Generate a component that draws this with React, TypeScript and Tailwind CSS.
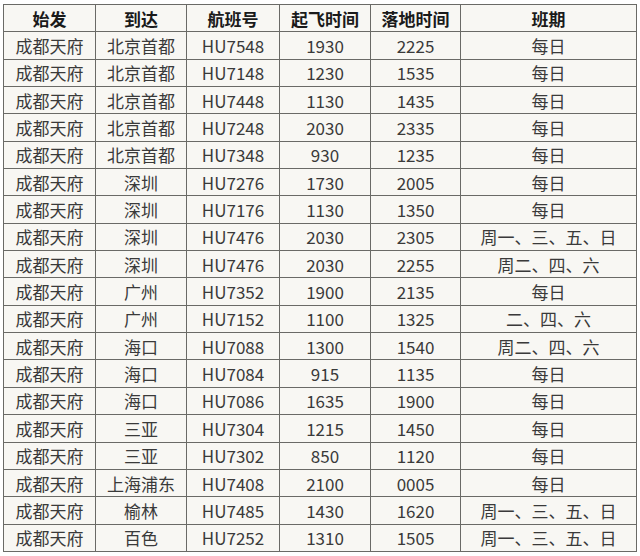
import React from "react";

const rows: string[][] = [
  ["成都天府", "北京首都", "HU7548", "1930", "2225", "每日"],
  ["成都天府", "北京首都", "HU7148", "1230", "1535", "每日"],
  ["成都天府", "北京首都", "HU7448", "1130", "1435", "每日"],
  ["成都天府", "北京首都", "HU7248", "2030", "2335", "每日"],
  ["成都天府", "北京首都", "HU7348", "930", "1235", "每日"],
  ["成都天府", "深圳", "HU7276", "1730", "2005", "每日"],
  ["成都天府", "深圳", "HU7176", "1130", "1350", "每日"],
  ["成都天府", "深圳", "HU7476", "2030", "2305", "周一、三、五、日"],
  ["成都天府", "深圳", "HU7476", "2030", "2255", "周二、四、六"],
  ["成都天府", "广州", "HU7352", "1900", "2135", "每日"],
  ["成都天府", "广州", "HU7152", "1100", "1325", "二、四、六"],
  ["成都天府", "海口", "HU7088", "1300", "1540", "周二、四、六"],
  ["成都天府", "海口", "HU7084", "915", "1135", "每日"],
  ["成都天府", "海口", "HU7086", "1635", "1900", "每日"],
  ["成都天府", "三亚", "HU7304", "1215", "1450", "每日"],
  ["成都天府", "三亚", "HU7302", "850", "1120", "每日"],
  ["成都天府", "上海浦东", "HU7408", "2100", "0005", "每日"],
  ["成都天府", "榆林", "HU7485", "1430", "1620", "周一、三、五、日"],
  ["成都天府", "百色", "HU7252", "1310", "1505", "周一、三、五、日"],
];

const headers = ["始发", "到达", "航班号", "起飞时间", "落地时间", "班期"];
const widths = [92, 91, 93, 91, 90, 176];

export default function App() {
  return (
    <div
      className="w-[640px] h-[556px] bg-white pt-[4px] pl-[3px]"
      style={{ fontFamily: '"Noto Sans CJK SC", "Noto Sans", sans-serif' }}
    >
      <table className="border-collapse table-fixed bg-[#f8f7f3] text-[17px] leading-none">
        <colgroup>
          {widths.map((w, i) => (
            <col key={i} style={{ width: w }} />
          ))}
        </colgroup>
        <thead>
          <tr className="h-[27.35px]">
            {headers.map((h) => (
              <th
                key={h}
                className="border border-[#6a6a66] p-0 text-center font-bold text-[#1a1a1a]"
              >
                {h}
              </th>
            ))}
          </tr>
        </thead>
        <tbody>
          {rows.map((r, i) => (
            <tr key={i} className="h-[27.35px]">
              {r.map((c, j) => (
                <td
                  key={j}
                  className="border border-[#6a6a66] p-0 text-center text-[#3a3a3a] whitespace-nowrap"
                >
                  {c}
                </td>
              ))}
            </tr>
          ))}
        </tbody>
      </table>
    </div>
  );
}
